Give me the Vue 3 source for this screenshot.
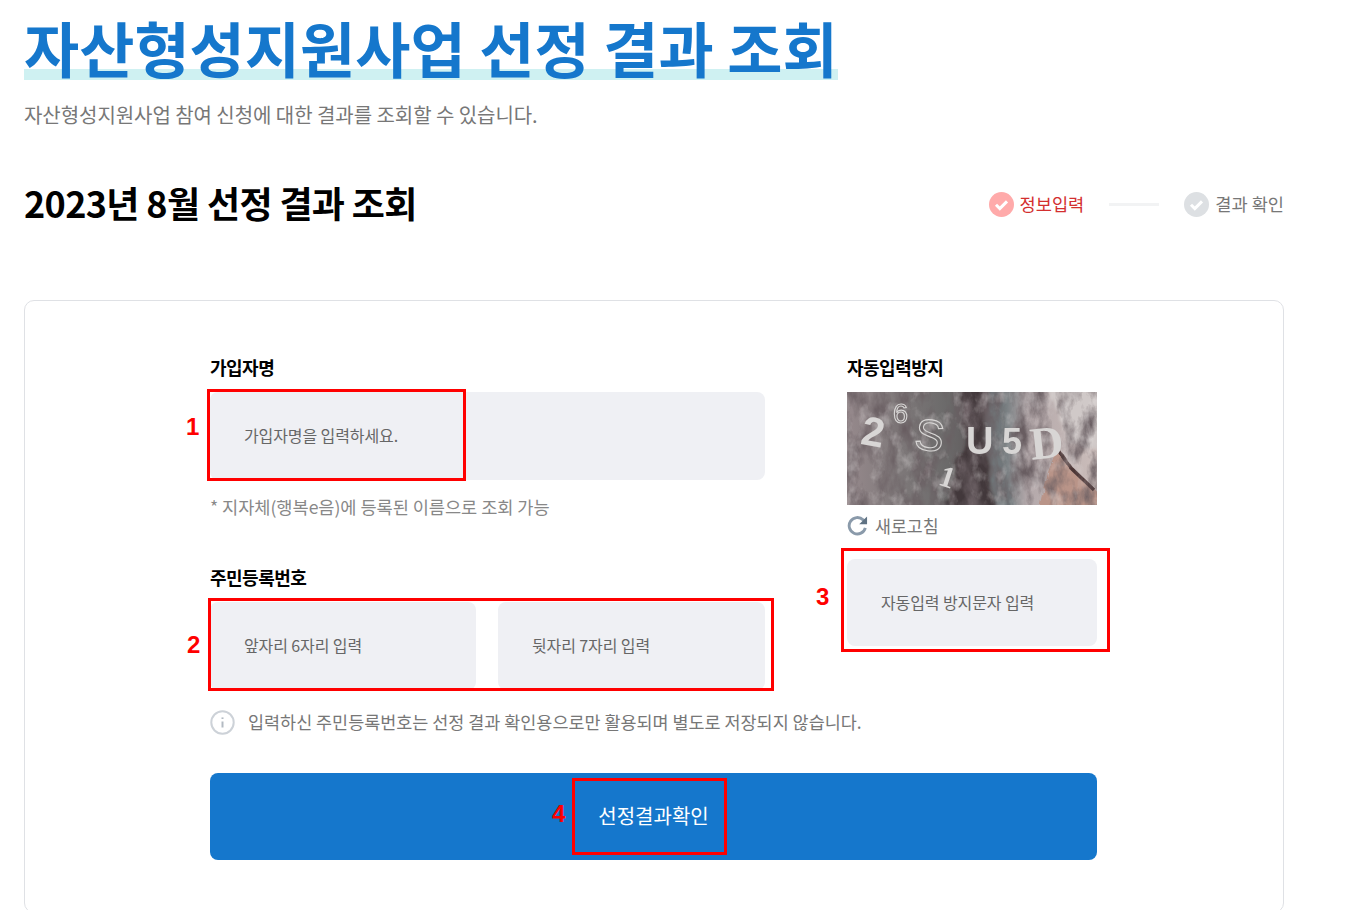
<template>
  <div class="page">
    <h1 class="title">자산형성지원사업 선정 결과 조회</h1>
    <p class="subtitle">자산형성지원사업 참여 신청에 대한 결과를 조회할 수 있습니다.</p>

    <div class="section-head">
      <h2>2023년 8월 선정 결과 조회</h2>
      <ul class="steps">
        <li class="step active">
          <svg class="check" viewBox="0 0 25 25"><circle cx="12.5" cy="12.5" r="12.5" /><path d="M7 12.8l3.8 3.8 7.2-7.2" /></svg>
          <span>정보입력</span>
        </li>
        <li class="step-line"></li>
        <li class="step">
          <svg class="check" viewBox="0 0 25 25"><circle cx="12.5" cy="12.5" r="12.5" /><path d="M7 12.8l3.8 3.8 7.2-7.2" /></svg>
          <span>결과 확인</span>
        </li>
      </ul>
    </div>

    <div class="card">
      <div class="form">
        <div class="cols">
          <div class="col-left">
            <div class="label">가입자명</div>
            <div class="input">가입자명을 입력하세요.</div>
            <p class="help">* 지자체(행복e음)에 등록된 이름으로 조회 가능</p>

            <div class="label label-second">주민등록번호</div>
            <div class="input-pair">
              <div class="input">앞자리 6자리 입력</div>
              <div class="input">뒷자리 7자리 입력</div>
            </div>
          </div>

          <div class="col-right">
            <div class="label">자동입력방지</div>
            <svg class="captcha" viewBox="0 0 250 113" preserveAspectRatio="none">
              <defs>
                <linearGradient id="bark" x1="0" x2="1" y1="0" y2="0">
                  <stop offset="0" stop-color="#96898c" />
                  <stop offset="0.2" stop-color="#7f797a" />
                  <stop offset="0.4" stop-color="#6b6a6a" />
                  <stop offset="0.55" stop-color="#5c5557" />
                  <stop offset="0.64" stop-color="#7a8083" />
                  <stop offset="0.72" stop-color="#b3a8aa" />
                  <stop offset="1" stop-color="#cbbdba" />
                </linearGradient>
                <filter id="grain" x="0" y="0" width="100%" height="100%">
                  <feTurbulence type="fractalNoise" baseFrequency="0.06 0.03" numOctaves="5" seed="7" />
                  <feColorMatrix values="0 0 0 0 0.14  0 0 0 0 0.11  0 0 0 0 0.12  2.6 0 0 0 -1.05" />
                </filter>
                <filter id="grainLight" x="0" y="0" width="100%" height="100%">
                  <feTurbulence type="fractalNoise" baseFrequency="0.08 0.05" numOctaves="4" seed="3" />
                  <feColorMatrix values="0 0 0 0 0.8  0 0 0 0 0.77  0 0 0 0 0.77  0 1.1 0 0 -0.55" />
                </filter>
                <filter id="rough" x="-10%" y="-10%" width="120%" height="120%">
                  <feTurbulence type="fractalNoise" baseFrequency="0.04" numOctaves="3" seed="5" result="n" />
                  <feDisplacementMap in="SourceGraphic" in2="n" scale="20" />
                  <feGaussianBlur stdDeviation="1.6" />
                </filter>
                <filter id="edge" x="-10%" y="-10%" width="120%" height="120%">
                  <feTurbulence type="fractalNoise" baseFrequency="0.09" numOctaves="2" seed="8" result="n" />
                  <feDisplacementMap in="SourceGraphic" in2="n" scale="7" />
                  <feGaussianBlur stdDeviation="0.7" />
                </filter>
                <filter id="chars"><feGaussianBlur stdDeviation="0.45" /></filter>
              </defs>
              <rect width="250" height="113" fill="url(#bark)" />
              <g filter="url(#rough)">
                <path d="M118 -5h20l-2 50 8 73h-46l16-50z" fill="#43383b" />
                <path d="M141 -5h15l-2 65 14 58h-18l-8-55z" fill="#71777a" />
                <path d="M200 -5h55v65l-35-10z" fill="#d0c9c8" />
              </g>
              <path d="M210 56l16 22 29 26v14h-62l8-38z" fill="#b99488" filter="url(#edge)" />
              <path d="M210 56l14 20 22 21" fill="none" stroke="#4b3636" stroke-width="3.5" filter="url(#edge)" />
              <rect width="250" height="113" filter="url(#grain)" />
              <rect width="250" height="113" filter="url(#grainLight)" />
              <g class="captcha-chars" filter="url(#chars)">
                <text x="15" y="54" font-size="41" class="bold" transform="rotate(10 26 38)">2</text>
                <text x="46" y="31" font-size="27" class="hollow">6</text>
                <text x="68" y="58" font-size="44" class="hollow" transform="rotate(8 80 42)">S</text>
                <text x="119" y="62" font-size="38" class="bold">U</text>
                <text x="155" y="62" font-size="36" class="bold">5</text>
                <text x="183" y="66" font-size="46" class="serif" transform="rotate(-6 200 50)">D</text>
                <text x="93" y="95" font-size="30" class="serif" transform="rotate(18 100 85)">1</text>
              </g>
            </svg>
            <div class="refresh">
              <svg viewBox="0 0 22 22"><path d="M19.2 13.4a8.6 8.6 0 1 1-2.3-8.3l2 2" /><path class="head" d="M21 1.6v8.2h-8.2z" /></svg>
              <span>새로고침</span>
            </div>
            <div class="input input-captcha">자동입력 방지문자 입력</div>
          </div>
        </div>

        <div class="info">
          <svg viewBox="0 0 25 25"><circle cx="12.5" cy="12.5" r="11.2" /><path d="M12.5 11.5v6" /><path d="M12.5 7.4v1.6" /></svg>
          <span>입력하신 주민등록번호는 선정 결과 확인용으로만 활용되며 별도로 저장되지 않습니다.</span>
        </div>

        <button class="submit" type="button">선정결과확인</button>
      </div>
    </div>

    <div v-for="box in marks" :key="box.no">
      <div class="mark-box" :style="box.rect"></div>
      <span class="mark-no" :style="box.pos">{{ box.no }}</span>
    </div>
  </div>
</template>

<script setup>
// 빨간 표시 상자와 번호 (스크린샷 위에 덧그린 주석)
const place = (left, top, width, height) => ({
  left: `${left}px`,
  top: `${top}px`,
  width: `${width}px`,
  height: `${height}px`
});
const at = (left, top) => ({ left: `${left}px`, top: `${top}px` });

const marks = [
  { no: 1, rect: place(207, 389, 259, 92), pos: at(186, 413) },
  { no: 2, rect: place(208, 598, 566, 93), pos: at(187, 631) },
  { no: 3, rect: place(841, 548, 269, 104), pos: at(816, 583) },
  { no: 4, rect: place(572, 778, 155, 77), pos: at(552, 800) }
];
</script>

<style scoped>
.page {
  position: relative;
  width: 1352px;
  height: 910px;
  overflow: hidden;
  box-sizing: border-box;
  padding: 14px 0 0 24px;
  background: #fff;
  font-family: "Noto Sans CJK KR", "Noto Sans", sans-serif;
  color: #666;
}

.title {
  display: inline-block;
  margin: 0;
  font-size: 60px;
  line-height: 66px;
  font-weight: 700;
  color: #1577cc;
  background: linear-gradient(transparent 55px, #cff1f2 55px);
  white-space: nowrap;
}

.subtitle {
  margin: 21px 0 0;
  font-size: 20px;
  line-height: 28px;
  letter-spacing: -0.05px;
  color: #777;
}

.section-head {
  display: flex;
  justify-content: space-between;
  align-items: center;
  width: 1260px;
  height: 44px;
  margin-top: 53px;
}
.section-head h2 {
  margin: 0;
  padding-bottom: 4px;
  font-size: 36px;
  line-height: 40px;
  font-weight: 700;
  letter-spacing: -0.65px;
  color: #000;
}

.steps {
  display: flex;
  align-items: center;
  margin: 0;
  padding: 0;
  list-style: none;
}
.step {
  display: flex;
  align-items: center;
  gap: 6px;
  font-size: 17.6px;
  color: #777;
}
.step span {
  padding-bottom: 2px;
}
.step .check {
  width: 25px;
  height: 25px;
}
.check circle {
  fill: #dde0e3;
}
.check path {
  fill: none;
  stroke: #fff;
  stroke-width: 3;
}
.step.active {
  color: #d32f2f;
}
.step.active .check circle {
  fill: #ffaaaa;
}
.step-line {
  width: 50px;
  height: 3px;
  margin: 0 25px;
  background: #f2f3f4;
}

.card {
  box-sizing: border-box;
  width: 1260px;
  margin-top: 74px;
  padding: 56px 0 52px 185px;
  background: #fff;
  border: 1px solid #dfe1e5;
  border-radius: 10px;
}
.form {
  width: 887px;
}
.cols {
  display: grid;
  grid-template-columns: 555px 250px;
  column-gap: 82px;
}

.label {
  font-size: 18px;
  line-height: 20px;
  font-weight: 700;
  letter-spacing: -0.5px;
  color: #000;
  margin-bottom: 15px;
}
.label-second {
  margin-top: 48px;
}

.input {
  box-sizing: border-box;
  height: 88px;
  padding: 0 0 2px 34px;
  display: flex;
  align-items: center;
  font-size: 16px;
  letter-spacing: -0.1px;
  color: #666;
  background: #eff0f4;
  border-radius: 8px;
}
.input-pair {
  display: grid;
  grid-template-columns: 266px 267px;
  column-gap: 22px;
}
.input-captcha {
  height: 87px;
  margin-top: 23px;
}

.help {
  margin: 15px 0 0;
  font-size: 17.6px;
  line-height: 24px;
  letter-spacing: -0.05px;
  color: #888;
}

.captcha {
  display: block;
  width: 250px;
  height: 113px;
}
.captcha-chars text {
  font-family: "Liberation Sans", sans-serif;
  fill: #d8d6d5;
}
.captcha-chars .bold {
  font-weight: 700;
}
.captcha-chars .serif {
  font-family: "Liberation Serif", serif;
  font-weight: 700;
}
.captcha-chars .hollow {
  fill: none;
  stroke: #d8d6d5;
  stroke-width: 1.1;
}

.refresh {
  display: flex;
  align-items: center;
  gap: 7px;
  height: 22px;
  margin-top: 9px;
  font-size: 17.3px;
  color: #777;
}
.refresh svg {
  width: 21px;
  height: 21px;
}
.refresh path {
  fill: none;
  stroke: #8a9aaa;
  stroke-width: 3;
}
.refresh .head {
  fill: #5f7283;
  stroke: none;
}

.info {
  display: flex;
  align-items: center;
  gap: 13px;
  height: 24px;
  margin-top: 20px;
  font-size: 17.45px;
  color: #777;
  white-space: nowrap;
}
.info span {
  padding-bottom: 2px;
}
.info svg {
  width: 25px;
  height: 25px;
}
.info circle,
.info path {
  fill: none;
  stroke: #cdd2d8;
  stroke-width: 2;
}
.info path {
  stroke: #b3bac2;
}

.submit {
  display: block;
  width: 887px;
  height: 87px;
  margin-top: 39px;
  padding: 0 0 2px;
  border: 0;
  border-radius: 8px;
  background: #1577cc;
  color: #fff;
  font-family: inherit;
  font-size: 20px;
}

/* 주석 레이어 */
.mark-box {
  position: absolute;
  box-sizing: border-box;
  border: 3px solid #f00;
}
.mark-no {
  position: absolute;
  font-family: "Liberation Sans", sans-serif;
  font-size: 24px;
  line-height: 28px;
  font-weight: 700;
  color: #f00;
}
</style>
